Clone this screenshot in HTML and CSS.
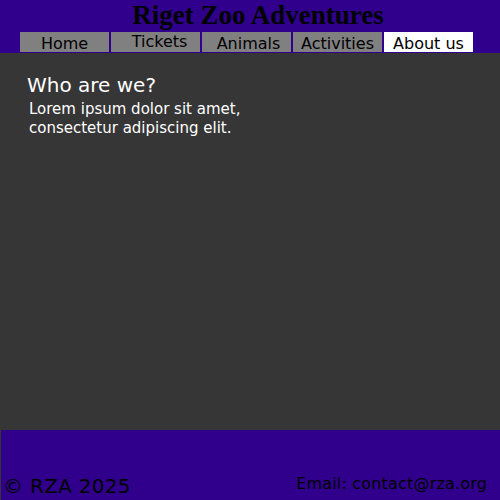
FILE: index.html
```html
<!DOCTYPE html>
<html>
<head>
<meta charset="utf-8">
<link rel="stylesheet" href="styles.css">
</head>
<body>
<header class="site-header">
  <h1 class="title">Riget Zoo Adventures</h1>
  <nav class="nav">
    <a class="nav-item">Home</a>
    <a class="nav-item nav-raised">Tickets</a>
    <a class="nav-item nav-shift">Animals</a>
    <a class="nav-item">Activities</a>
    <a class="nav-item active">About us</a>
  </nav>
</header>
<main class="content">
  <h2 class="heading">Who are we?</h2>
  <p class="text">Lorem ipsum dolor sit amet,<br>consectetur adipiscing elit.</p>
</main>
<footer class="site-footer">
  <span class="copy">© RZA 2025</span>
  <span class="email">Email: contact@rza.org</span>
</footer>
</body>
</html>
```
FILE: styles.css
```css
html, body {
  margin: 0;
  padding: 0;
  background: #363636;
  font-family: "DejaVu Sans", sans-serif;
}
.site-header {
  background: #30008c;
  height: 53px;
  box-sizing: border-box;
}
.title {
  margin: 0;
  padding-left: 16px;
  text-align: center;
  font-family: "Liberation Serif", serif;
  font-weight: bold;
  font-size: 27px;
  line-height: 31px;
  color: #000;
}
.nav {
  display: flex;
  gap: 2px;
  margin-top: 1px;
  padding-left: 20px;
}
.nav-item {
  width: 89px;
  height: 20px;
  box-sizing: border-box;
  background: #808080;
  color: #000;
  font-size: 16px;
  line-height: 23px;
  text-align: center;
}
.nav-raised {
  line-height: 20px;
  padding-left: 8px;
}
.nav-shift {
  padding-left: 4px;
}
.nav-item.active {
  background: #fff;
}
.content {
  height: 377px;
  padding: 20px 0 0 27px;
  box-sizing: border-box;
  color: #fff;
}
.heading {
  margin: 0;
  font-size: 20px;
  font-weight: normal;
  line-height: 24px;
}
.text {
  margin: 3px 0 0 2px;
  font-size: 15px;
  line-height: 19px;
}
.site-footer {
  margin-left: 1px;
  height: 70px;
  background: #30008c;
  display: flex;
  justify-content: space-between;
  align-items: flex-end;
  color: #000;
  padding: 0 13px 0 2px;
}
.copy {
  font-size: 20px;
  letter-spacing: 0.3px;
  padding-bottom: 2px;
}
.email {
  font-size: 16px;
  letter-spacing: 0.18px;
  padding-bottom: 7px;
}
```
